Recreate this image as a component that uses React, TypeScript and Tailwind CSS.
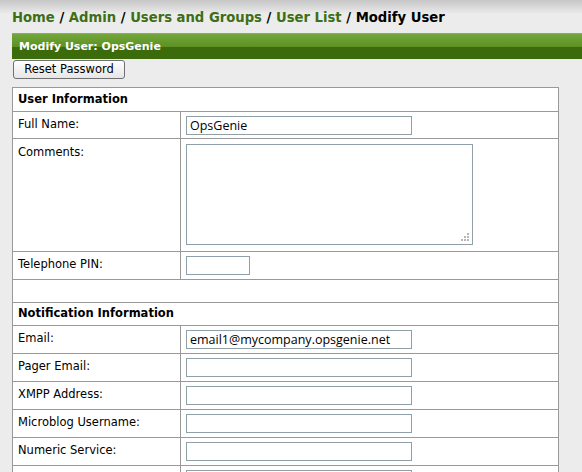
import React from 'react';

const labelFont = { fontFamily: '"DejaVu Sans", Verdana, sans-serif' };

const Field: React.FC<{ label: string; value?: string; h?: string }> = ({ label, value, h = 'h-[28px]' }) => (
  <tr className={h}>
    <td className="border border-[#999] align-top px-[5px] pt-[4px] text-[11.5px] text-black">{label}</td>
    <td className="border border-[#999] align-top pl-[5px] pt-[4px]">
      <input
        defaultValue={value}
        className="block w-[226px] h-[19px] border border-[#8fa0a8] bg-white px-[3px] text-[12.5px] text-black outline-none"
        style={{ fontFamily: '"Open Sans", sans-serif' }}
      />
    </td>
  </tr>
);

const SectionHead: React.FC<{ title: string; h?: string }> = ({ title, h = 'h-[23px]' }) => (
  <tr className={h}>
    <td colSpan={2} className="border border-[#999] px-[5px] text-[11.5px] font-bold text-black">{title}</td>
  </tr>
);

export default function App() {
  return (
    <div className="min-h-screen w-[582px] h-[472px] overflow-hidden bg-[#ececec] bg-gradient-to-b from-[#c6c6c6] to-[#ececec] bg-[length:100%_14px] bg-no-repeat" style={labelFont}>
      <div className="pl-3 pt-[9px] h-[33px] text-[13.2px] font-bold leading-[18px] text-[#3e6e15]">
        <span>Home</span> <span className="text-black">/</span> <span>Admin</span>{' '}
        <span className="text-black">/</span> <span>Users and Groups</span>{' '}
        <span className="text-black">/</span> <span>User List</span>{' '}
        <span className="text-black">/</span> <span className="text-black">Modify User</span>
      </div>

      <div className="ml-3 border-t border-[#9a9a9a]">
        <div className="h-[13px] bg-gradient-to-b from-[#74a73b] to-[#5c9023] relative">
          <span className="absolute left-[7px] top-[6px] text-[11px] font-bold text-white leading-[13px]">Modify User: OpsGenie</span>
        </div>
        <div className="h-[12px] bg-[#3b6b0a]" />
      </div>

      <div className="pl-[13px] pt-[1px]">
        <button className="block h-[19px] w-[112px] rounded-[3px] border border-[#707070] bg-gradient-to-b from-white to-[#e6e6e6] text-[11.5px] text-black leading-[17px]">
          Reset Password
        </button>
      </div>

      <table className="ml-3 mt-[8px] w-[547px] border-collapse bg-white">
        <colgroup>
          <col className="w-[168px]" />
          <col />
        </colgroup>
        <tbody>
          <SectionHead title="User Information" h="h-[24px]" />
          <Field label="Full Name:" value="OpsGenie" h="h-[27px]" />
          <tr className="h-[113px]">
            <td className="border border-[#999] align-top px-[5px] pt-[5px] text-[11.5px] text-black">Comments:</td>
            <td className="border border-[#999] align-top pl-[5px] pt-[5px]">
              <div className="relative w-[287px] h-[101px]">
                <textarea className="block w-full h-full resize-none border border-[#8fa0a8] bg-white outline-none" />
                <svg className="absolute right-[3px] bottom-[3px]" width="9" height="9" viewBox="0 0 9 9" fill="#b8b8b0">
                  <rect x="6" y="0" width="2" height="2" />
                  <rect x="3" y="3" width="2" height="2" />
                  <rect x="6" y="3" width="2" height="2" />
                  <rect x="0" y="6" width="2" height="2" />
                  <rect x="3" y="6" width="2" height="2" />
                  <rect x="6" y="6" width="2" height="2" />
                </svg>
              </div>
            </td>
          </tr>
          <tr className="h-[28px]">
            <td className="border border-[#999] align-top px-[5px] pt-[4px] text-[11.5px] text-black">Telephone PIN:</td>
            <td className="border border-[#999] align-top pl-[5px] pt-[4px]">
              <input className="block w-[64px] h-[19px] border border-[#8fa0a8] bg-white outline-none" />
            </td>
          </tr>
          <tr className="h-[23px]">
            <td colSpan={2} className="border border-[#999]" />
          </tr>
          <SectionHead title="Notification Information" />
          <Field label="Email:" value="email1@mycompany.opsgenie.net" />
          <Field label="Pager Email:" />
          <Field label="XMPP Address:" />
          <Field label="Microblog Username:" />
          <Field label="Numeric Service:" />
          <Field label="" />
        </tbody>
      </table>
    </div>
  );
}
